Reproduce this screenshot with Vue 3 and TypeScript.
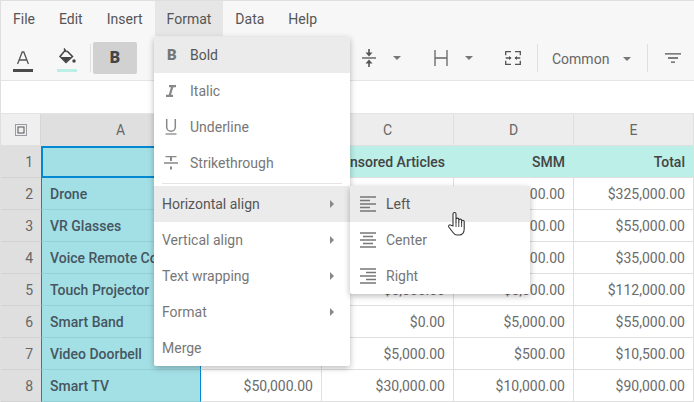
<script setup lang="ts">
interface Row { n: number; name: string; b: string; c: string; d: string; e: string }
const menus = ['File', 'Edit', 'Insert', 'Format', 'Data', 'Help']
const columns = ['A', 'B', 'C', 'D', 'E']
const rows: Row[] = [
  { n: 2, name: 'Drone', b: '', c: '', d: '$75,000.00', e: '$325,000.00' },
  { n: 3, name: 'VR Glasses', b: '', c: '', d: '$10,000.00', e: '$55,000.00' },
  { n: 4, name: 'Voice Remote Control', b: '', c: '', d: '$10,000.00', e: '$35,000.00' },
  { n: 5, name: 'Touch Projector', b: '', c: '$5,000.00', d: '$5,000.00', e: '$112,000.00' },
  { n: 6, name: 'Smart Band', b: '', c: '$0.00', d: '$5,000.00', e: '$55,000.00' },
  { n: 7, name: 'Video Doorbell', b: '', c: '$5,000.00', d: '$500.00', e: '$10,500.00' },
  { n: 8, name: 'Smart TV', b: '$50,000.00', c: '$30,000.00', d: '$10,000.00', e: '$90,000.00' },
]
const mainItems = ['Horizontal align', 'Vertical align', 'Text wrapping', 'Format']
</script>

<template>
  <div class="app">
    <nav class="menubar">
      <span v-for="m in menus" :key="m" class="menu-btn" :class="{ open: m === 'Format' }">{{ m }}</span>
    </nav>

    <div class="toolbar">
      <div class="tb-icon">
        <svg width="20" height="26" viewBox="0 0 20 26"><path d="M4.6 18 9.2 6h1.600l4.600 12M6.200 14h7.600" fill="none" stroke="#555" stroke-width="1.3"/><rect y="23" width="20" height="3" fill="#4a4a4a"/></svg>
      </div>
      <div class="tb-icon">
        <svg width="20" height="26" viewBox="0 0 20 26"><path d="M8.500 4 3 10.500 9 16.500 15.500 10.500 10 5" fill="none" stroke="#444" stroke-width="1.5"/><path d="M4 11h10.500L9 16z" fill="#444"/><path d="M7 2.500 9.500 6" stroke="#444" stroke-width="1.4"/><circle cx="17" cy="15" r="1.700" fill="#444"/><rect y="23" width="20" height="3" fill="#bbefe8"/></svg>
      </div>
      <i class="sep first"></i>
      <div class="bold-btn">B</div>

      <div class="tb-right">
        <div class="tb-cell w-valign">
          <svg width="14" height="18" viewBox="0 0 14 18"><path d="M0 9h14" stroke="#555" stroke-width="1.3"/><path d="M7 0v4.500M7 13.500V18" stroke="#555" stroke-width="1.600"/><path d="M3.500 3.500h7L7 7.500zM3.500 14.500h7L7 10.500z" fill="#555"/></svg>
          <b class="caret"></b>
        </div>
        <div class="tb-cell w-halign">
          <svg width="14" height="16" viewBox="0 0 14 16"><path d="M1 0v16M13 0v16M1 8h12" stroke="#666" stroke-width="1.3" fill="none"/></svg>
          <b class="caret"></b>
        </div>
        <div class="tb-cell w-merge">
          <svg width="16" height="14" viewBox="0 0 16 14"><path d="M6 .7H.7v3.500M10 .7h5.300v3.500M6 13.300H.7V9.800M10 13.300h5.300V9.800M.7 7H6M10 7h5.300" fill="none" stroke="#555" stroke-width="1.3"/><path d="M4 5v4L6.500 7zM12 5v4L9.500 7z" fill="#555"/></svg>
        </div>
        <i class="sep"></i>
        <div class="tb-cell w-format"><span>Common</span><b class="caret"></b></div>
        <i class="sep"></i>
        <div class="tb-cell w-filter">
          <svg width="16" height="10" viewBox="0 0 16 10"><path d="M0 .8h16M3 5h10M6 9.200h4" stroke="#555" stroke-width="1.3"/></svg>
        </div>
      </div>
    </div>

    <div class="formula"></div>

    <div class="sheet">
      <div class="corner">
        <svg width="12" height="12" viewBox="0 0 12 12"><rect x=".5" y=".5" width="11" height="11" fill="none" stroke="#445" stroke-dasharray="1 1"/><rect x="3" y="3" width="6" height="6" fill="none" stroke="#555"/></svg>
      </div>
      <div v-for="c in columns" :key="c" class="col-head" :class="{ sel: c === 'A' }">{{ c }}</div>

      <div class="row-head">1</div>
      <div class="cell name active"></div>
      <div class="cell top"></div>
      <div class="cell top">Sponsored Articles</div>
      <div class="cell top">SMM</div>
      <div class="cell top">Total</div>

      <template v-for="r in rows" :key="r.n">
        <div class="row-head">{{ r.n }}</div>
        <div class="cell name">{{ r.name }}</div>
        <div class="cell">{{ r.b }}</div>
        <div class="cell">{{ r.c }}</div>
        <div class="cell">{{ r.d }}</div>
        <div class="cell">{{ r.e }}</div>
      </template>
    </div>

    <div class="dropdown main">
      <div class="item icon-item hover">
        <span class="glyph b">B</span><span>Bold</span>
      </div>
      <div class="item icon-item">
        <svg class="glyph" width="16" height="12" viewBox="0 0 16 12"><path d="M6 1.200h7M3 10.800h7M9.500 1.200 6.500 10.800" fill="none" stroke="#888" stroke-width="2.200"/></svg><span>Italic</span>
      </div>
      <div class="item icon-item">
        <svg class="glyph" width="16" height="16" viewBox="0 0 16 16"><path d="M3.700 0v8a4.300 4.300 0 0 0 8.600 0V0" fill="none" stroke="#888" stroke-width="1.500"/><path d="M2.500 15h11" stroke="#888" stroke-width="1.300"/></svg><span>Underline</span>
      </div>
      <div class="item icon-item">
        <svg class="glyph" width="16" height="14" viewBox="0 0 16 14"><path d="M2.500 .7h11M1 7h14" stroke="#888" stroke-width="1.300"/><path d="M8 1v4M8 10.500v3" stroke="#888" stroke-width="2"/></svg><span>Strikethrough</span>
      </div>
      <hr class="divider" />
      <div v-for="(label, i) in mainItems" :key="label" class="item sub" :class="{ hover: i === 0 }">
        <span>{{ label }}</span><b class="arrow"></b>
      </div>
      <div class="item sub">Merge</div>
    </div>

    <div class="dropdown align">
      <div class="item align-item hover">
        <svg width="16" height="16" viewBox="0 0 16 16"><path d="M0 1h16M0 4.500h10M0 8h16M0 11.500h10M0 15h16" stroke="#777" stroke-width="1.500"/></svg><span>Left</span>
      </div>
      <div class="item align-item">
        <svg width="16" height="16" viewBox="0 0 16 16"><path d="M0 1h16M3 4.500h10M0 8h16M3 11.500h10M0 15h16" stroke="#777" stroke-width="1.500"/></svg><span>Center</span>
      </div>
      <div class="item align-item">
        <svg width="16" height="16" viewBox="0 0 16 16"><path d="M0 1h16M6 4.500h10M0 8h16M6 11.500h10M0 15h16" stroke="#777" stroke-width="1.500"/></svg><span>Right</span>
      </div>
    </div>

    <svg class="hand" width="20" height="26" viewBox="0 0 20 26">
      <path d="M6 15V3a1.500 1.500 0 0 1 3 0v8-2.500a1.400 1.400 0 0 1 2.800 0V11 9.500a1.400 1.400 0 0 1 2.800 0V11.500 10.500a1.300 1.300 0 0 1 2.600 0V18c0 3.500-2 6-5 6H10c-2 0-3-1-4-2.500L1.800 16c-.9-1.400.9-3 2.200-1.800z" fill="#fff" stroke="#333" stroke-width="1.100" stroke-linejoin="round"/>
      <path d="M9 11v5M11.800 11v5M14.600 11.500V16" stroke="#333" stroke-width=".9" fill="none"/>
    </svg>
  </div>
</template>

<style scoped>
.app {
  position: relative;
  width: 694px;
  height: 402px;
  box-sizing: border-box;
  overflow: hidden;
  background: #fff;
  border-top: 1px solid #dfdfdf;
  border-left: 1px solid #dfdfdf;
  font: 14px/20px Roboto, sans-serif;
  color: #666;
}
.menubar {
  display: flex;
  height: 35px;
  background: #f7f7f7;
}
.menu-btn {
  display: flex;
  align-items: center;
  padding: 0 12px;
  color: #555;
}
.menu-btn.open { background: #e6e6e6; }
.toolbar {
  display: flex;
  align-items: center;
  height: 44px;
  background: #f7f7f7;
  border-bottom: 1px solid #e4e4e4;
}
.tb-icon {
  display: flex;
  justify-content: center;
  width: 44px;
  margin-top: 2px;
}
.sep {
  display: block;
  flex: none;
  width: 1px;
  height: 28px;
  background: #dfdfdf;
}
.sep.first { margin-left: 1px; }
.bold-btn {
  display: flex;
  align-items: center;
  justify-content: center;
  width: 44px;
  height: 32px;
  margin-left: 2px;
  border-radius: 2px;
  background: #d1d1d1;
  color: #444;
  font-weight: 900;
  font-size: 16px;
}
.tb-right {
  display: flex;
  align-items: center;
  margin-left: auto;
}
.tb-cell {
  display: flex;
  align-items: center;
  flex: none;
  box-sizing: border-box;
}
.w-valign { width: 72px; }
.w-halign { width: 71px; }
.w-merge { width: 32px; }
.w-format { width: 109px; padding-left: 14px; padding-top: 2px; }
.w-filter { width: 46px; padding-left: 17px; }
.w-valign .caret { margin-left: 17px; }
.w-halign .caret { margin-left: 17px; }
.w-format .caret { margin-left: 14px; }
.caret {
  width: 0;
  height: 0;
  border: 4px solid transparent;
  border-top: 4px solid #777;
  border-bottom: 0;
}
.formula {
  height: 32px;
  background: #fff;
}
.sheet {
  display: grid;
  grid-template-columns: 40px 160px 121px 132px 120px 120px;
  grid-auto-rows: 32px;
  border-top: 1px solid #e4e4e4;
}
.corner {
  display: flex;
  align-items: center;
  justify-content: center;
  box-sizing: border-box;
  background: #efefef;
  border-right: 1px solid #d6d6d6;
  border-bottom: 1px solid #dfdfdf;
}
.col-head {
  display: flex;
  align-items: center;
  justify-content: center;
  background: #ededed;
  color: #666;
  box-sizing: border-box;
  border-right: 1px solid #dfdfdf;
  border-bottom: 1px solid #dfdfdf;
}
.col-head.sel { background: #dfdfdf; }
.row-head {
  display: flex;
  align-items: center;
  justify-content: flex-end;
  padding-right: 8px;
  box-sizing: border-box;
  background: #dfdfdf;
  border-bottom: 1px solid #d2d2d2;
  color: #666;
}
.cell {
  display: flex;
  align-items: center;
  justify-content: flex-end;
  min-width: 0;
  padding: 0 8px;
  box-sizing: border-box;
  white-space: nowrap;
  overflow: hidden;
  border-right: 1px solid #dfdfdf;
  border-bottom: 1px solid #dfdfdf;
  color: #6b6b6b;
}
.cell.top {
  background: #bbefe8;
  color: #444;
  font-weight: 500;
}
.cell.name {
  justify-content: flex-start;
  background: #a3e0e6;
  color: #465560;
  font-weight: 500;
  border-left: 1px solid #0288d1;
  border-right: 1px solid #0288d1;
  border-bottom: 1px solid #93d0d6;
}
.cell.active {
  border: 2px solid #0288d1;
}
.dropdown {
  position: absolute;
  background: #fff;
  border-radius: 2px;
  box-shadow: 0 2px 6px rgba(0, 0, 0, 0.28);
}
.main { left: 153px; top: 36px; width: 196px; z-index: 2; }
.align { left: 349px; top: 185px; width: 180px; z-index: 3; }
.item {
  display: flex;
  align-items: center;
  height: 36px;
  color: #777;
}
.item.hover {
  background: #ebebeb;
  color: #555;
}
.icon-item { padding-left: 36px; position: relative; }
.glyph {
  position: absolute;
  left: 9px;
  top: 50%;
  transform: translateY(-50%);
}
.glyph.b {
  left: 13px;
  font-weight: 900;
  font-size: 15px;
  color: #777;
}
.divider {
  height: 1px;
  border: 0;
  margin: 2px 8px 2px;
  background: #e4e4e4;
}
.sub {
  justify-content: space-between;
  padding: 0 16px 0 8px;
}
.arrow {
  width: 0;
  height: 0;
  border: 4px solid transparent;
  border-left: 4px solid #888;
  border-right: 0;
}
.align-item {
  gap: 10px;
  padding-left: 10px;
}
.hand {
  position: absolute;
  left: 446px;
  top: 210px;
  z-index: 4;
}
</style>

<style>
html, body { margin: 0; background: #fff; overflow: hidden; }
</style>
